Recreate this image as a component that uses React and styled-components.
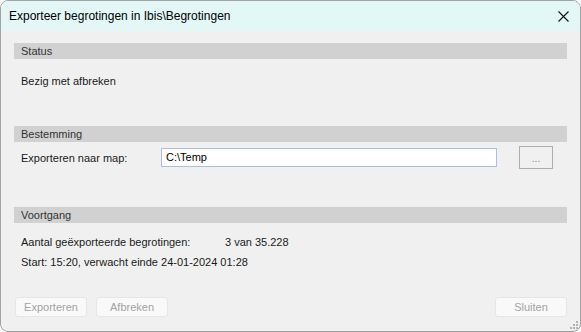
import React from "react";
import styled, { createGlobalStyle } from "styled-components";

const Global = createGlobalStyle`
  html, body {
    margin: 0;
    padding: 0;
    background: #ffffff;
  }
  * {
    box-sizing: border-box;
  }
`;

const Window = styled.div`
  width: 581px;
  height: 332px;
  display: flex;
  flex-direction: column;
  background: #f0f0f0;
  border: 1px solid #a3a3a3;
  border-radius: 8px;
  overflow: hidden;
  position: relative;
  font-family: "Liberation Sans", Arial, sans-serif;
  font-size: 11px;
  color: #1a1a1a;
`;

const TitleBar = styled.div`
  height: 30px;
  flex: none;
  display: flex;
  align-items: center;
  justify-content: space-between;
  padding: 0 9px 0 8px;
  background: #e3f7f7;
`;

const Title = styled.span`
  font-size: 12px;
  color: #000;
`;

const CloseButton = styled.div`
  width: 14px;
  height: 14px;
  display: flex;
  align-items: center;
  justify-content: center;
  margin-right: 1px;
`;

const Body = styled.div`
  flex: 1;
  display: flex;
  flex-direction: column;
  padding: 12px 13px 0 13px;
`;

const Section = styled.div`
  display: flex;
  flex-direction: column;
  height: ${(p) => p.$height}px;
  flex: none;
`;

const Header = styled.div`
  height: 16px;
  line-height: 16px;
  padding-left: 7px;
  background: #d1d1d1;
  color: #333;
`;

const Content = styled.div`
  display: flex;
  flex-direction: column;
  gap: ${(p) => p.$gap || 0}px;
  padding: ${(p) => p.$top}px 0 0 7px;
`;

const Line = styled.div`
  height: 14px;
  line-height: 14px;
  display: flex;
`;

const Label = styled.span`
  width: ${(p) => p.$width}px;
  flex: none;
`;

const Row = styled.div`
  display: flex;
  align-items: center;
  height: 23px;
`;

const PathInput = styled.div`
  width: 336px;
  height: 19px;
  line-height: 17px;
  padding-left: 4px;
  background: #fff;
  border: 1px solid #a9bfe3;
  color: #000;
`;

const BrowseButton = styled.div`
  width: 34px;
  height: 23px;
  margin-left: 22px;
  border: 1px solid #adadad;
  display: flex;
  align-items: center;
  justify-content: center;
  color: #8a7f7f;
  font-size: 10px;
  padding-top: 2px;
`;

const Footer = styled.div`
  margin-top: auto;
  display: flex;
  align-items: center;
  gap: 9px;
  padding: 0 0 14px 1px;
`;

const Button = styled.div`
  width: ${(p) => p.$width}px;
  height: 20px;
  display: flex;
  align-items: center;
  justify-content: center;
  background: #f9f9f9;
  border: 1px solid #e6e6e6;
  border-radius: 3px;
  color: #a3a3a3;
  margin-left: ${(p) => (p.$push ? "auto" : "0")};
`;

const Grip = styled.svg`
  position: absolute;
  right: 1px;
  bottom: 1px;
`;

export default function App() {
  return (
    <>
      <Global />
      <Window>
        <TitleBar>
          <Title>Exporteer begrotingen in Ibis\Begrotingen</Title>
          <CloseButton>
            <svg width="11" height="11" viewBox="0 0 11 11">
              <path d="M0.5 0.5L10.5 10.5M10.5 0.5L0.5 10.5" stroke="#111" strokeWidth="1.1" />
            </svg>
          </CloseButton>
        </TitleBar>
        <Body>
          <Section $height={83}>
            <Header>Status</Header>
            <Content $top={15}>
              <Line>Bezig met afbreken</Line>
            </Content>
          </Section>
          <Section $height={81}>
            <Header>Bestemming</Header>
            <Content $top={4}>
              <Row>
                <Label $width={140}>Exporteren naar map:</Label>
                <PathInput>C:\Temp</PathInput>
                <BrowseButton>...</BrowseButton>
              </Row>
            </Content>
          </Section>
          <Section $height={62}>
            <Header>Voortgang</Header>
            <Content $top={12} $gap={6}>
              <Line>
                <Label $width={204}>Aantal geëxporteerde begrotingen:</Label>
                <span>3 van 35.228</span>
              </Line>
              <Line>Start: 15:20, verwacht einde 24-01-2024 01:28</Line>
            </Content>
          </Section>
          <Footer>
            <Button $width={72}>Exporteren</Button>
            <Button $width={72}>Afbreken</Button>
            <Button $width={72} $push>Sluiten</Button>
          </Footer>
        </Body>
        <Grip width="10" height="10" viewBox="0 0 10 10">
          {[[7, 1], [4, 4], [7, 4], [1, 7], [4, 7], [7, 7]].map(([x, y]) => (
            <rect key={`${x}-${y}`} x={x} y={y} width="2" height="2" fill="#b4b4b4" />
          ))}
        </Grip>
      </Window>
    </>
  );
}
